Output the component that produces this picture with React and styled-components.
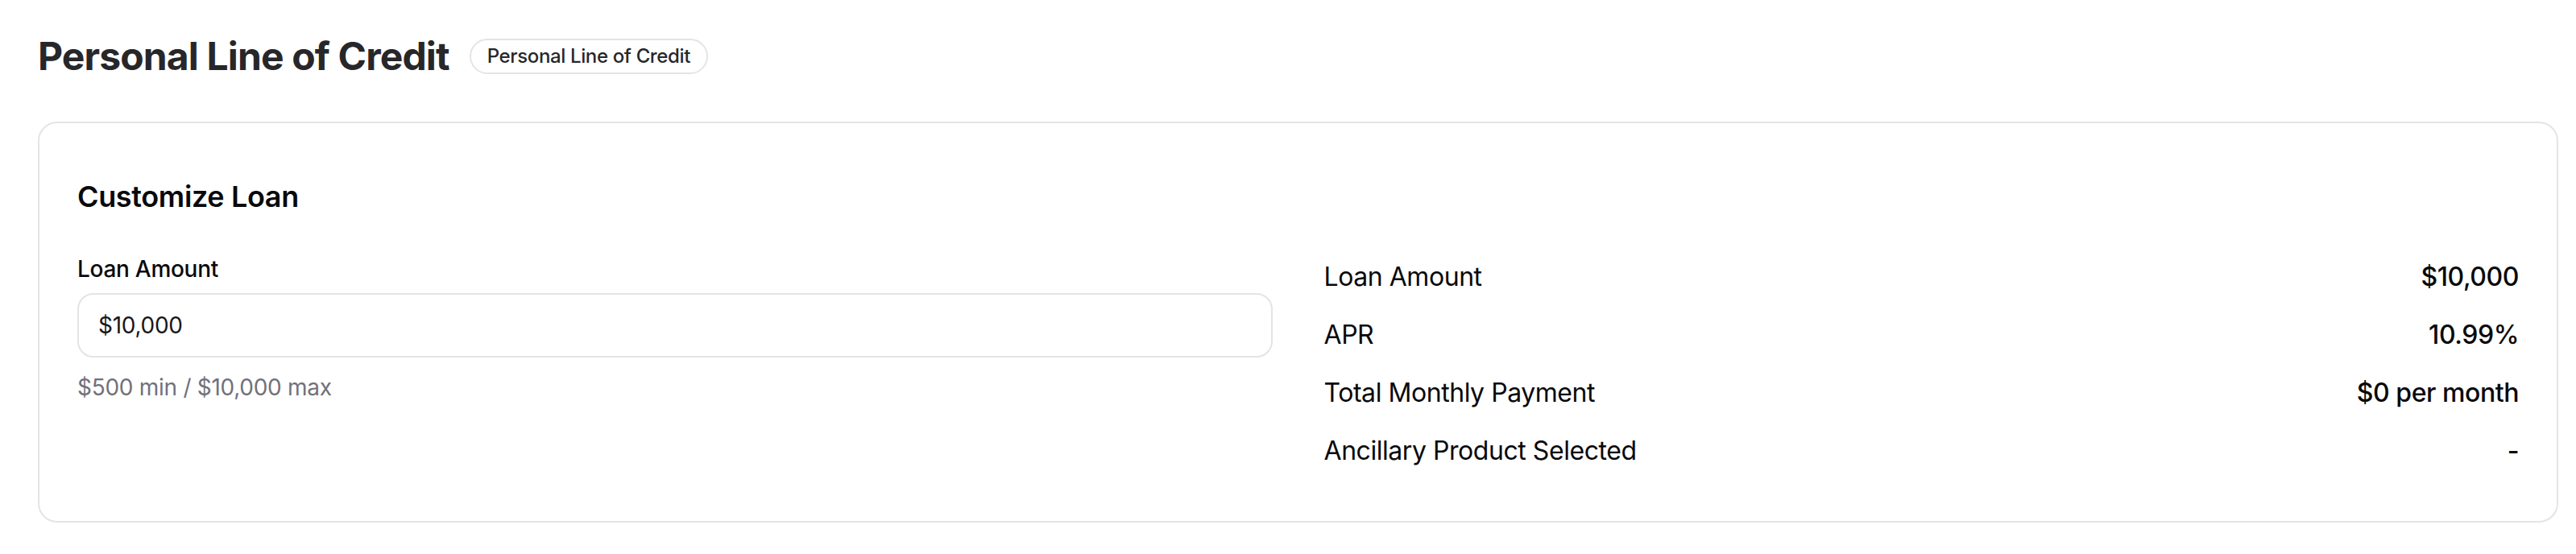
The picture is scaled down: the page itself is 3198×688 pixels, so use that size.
import React from "react";
import styled, { createGlobalStyle } from "styled-components";

const GlobalStyle = createGlobalStyle`
  html, body {
    margin: 0;
    padding: 0;
    background: #ffffff;
  }
  body {
    font-family: Inter, "Noto Sans", "Liberation Sans", sans-serif;
    color: #09090b;
    -webkit-font-smoothing: antialiased;
  }
  * { box-sizing: border-box; }
`;

const Page = styled.main`
  padding: 38px 22px 40px 47px;
`;

const Header = styled.header`
  display: flex;
  align-items: center;
  gap: 25px;
  margin-bottom: 49px;
`;

const Title = styled.h1`
  margin: 0;
  font-size: 48px;
  line-height: 64px;
  font-weight: 700;
  letter-spacing: -0.018em;
  color: #27272a;
`;

const Badge = styled.span`
  display: inline-flex;
  align-items: center;
  height: 44px;
  padding: 0 20px;
  border: 2px solid #e4e4e7;
  border-radius: 9999px;
  font-size: 24px;
  line-height: 32px;
  font-weight: 500;
  letter-spacing: -0.015em;
  color: #27272a;
  white-space: nowrap;
`;

const Card = styled.section`
  border: 2px solid #e4e4e7;
  border-radius: 24px;
  background: #ffffff;
  padding: 63px 47px 51px;
`;

const CardTitle = styled.h2`
  margin: 0 0 36px;
  font-size: 36px;
  line-height: 56px;
  font-weight: 600;
  letter-spacing: -0.01em;
  color: #09090b;
`;

const Columns = styled.div`
  display: grid;
  grid-template-columns: 1fr 1fr;
  gap: 64px;
  align-items: start;
`;

const Field = styled.div`
  display: flex;
  flex-direction: column;
  padding-top: 6px;
`;

const Label = styled.label`
  font-size: 28px;
  line-height: 40px;
  font-weight: 500;
  letter-spacing: -0.01em;
  color: #09090b;
`;

const Input = styled.input`
  margin-top: 10px;
  height: 80px;
  width: 100%;
  padding: 0 24px;
  border: 2px solid #e4e4e7;
  border-radius: 20px;
  background: #ffffff;
  font-family: inherit;
  font-size: 28px;
  line-height: 40px;
  letter-spacing: -0.01em;
  color: #18181b;
  outline: none;
`;

const Hint = styled.p`
  margin: 17px 0 0;
  font-size: 28px;
  line-height: 40px;
  letter-spacing: -0.01em;
  color: #71717a;
`;

const Summary = styled.dl`
  margin: 0;
  display: flex;
  flex-direction: column;
`;

const Row = styled.div`
  display: flex;
  justify-content: space-between;
  align-items: center;
  padding: 12px 0;
  font-size: 32px;
  line-height: 48px;
  letter-spacing: -0.014em;
`;

const Term = styled.dt`
  font-weight: 400;
  color: #09090b;
`;

const Value = styled.dd`
  margin: 0;
  font-weight: 500;
  color: #09090b;
`;

const summary = [
  ["Loan Amount", "$10,000"],
  ["APR", "10.99%"],
  ["Total Monthly Payment", "$0 per month"],
  ["Ancillary Product Selected", "-"],
];

export default function App() {
  return (
    <>
      <GlobalStyle />
      <Page>
        <Header>
          <Title>Personal Line of Credit</Title>
          <Badge>Personal Line of Credit</Badge>
        </Header>
        <Card>
          <CardTitle>Customize Loan</CardTitle>
          <Columns>
            <Field>
              <Label htmlFor="loan-amount">Loan Amount</Label>
              <Input id="loan-amount" defaultValue="$10,000" />
              <Hint>$500 min / $10,000 max</Hint>
            </Field>
            <Summary>
              {summary.map(([term, value]) => (
                <Row key={term}>
                  <Term>{term}</Term>
                  <Value>{value}</Value>
                </Row>
              ))}
            </Summary>
          </Columns>
        </Card>
      </Page>
    </>
  );
}
